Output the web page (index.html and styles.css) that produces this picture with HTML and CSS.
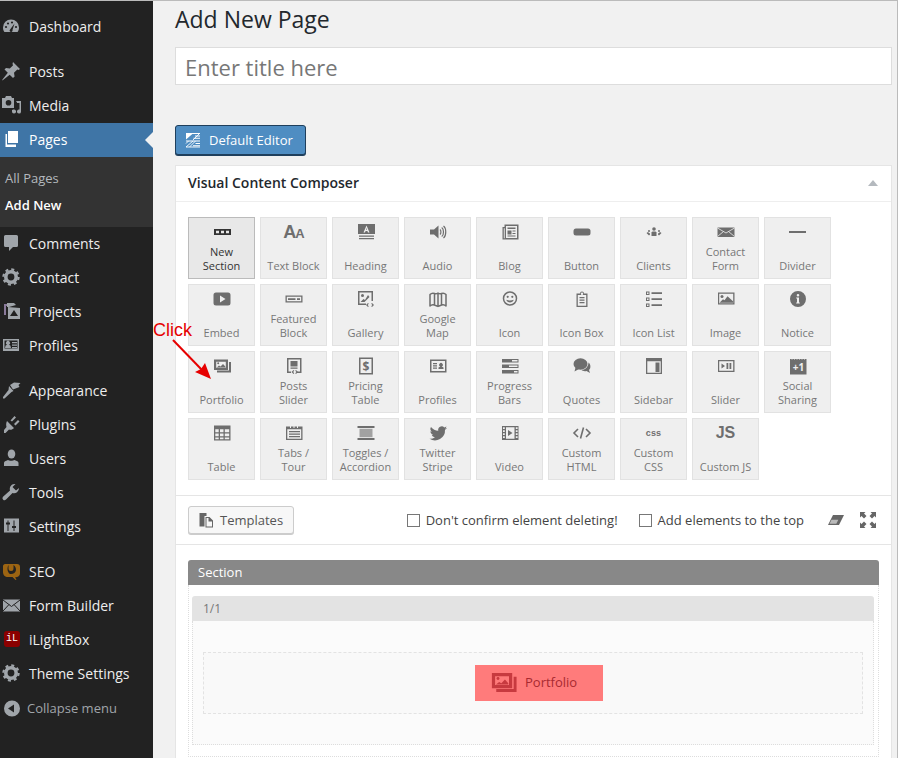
FILE: index.html
```html
<!DOCTYPE html>
<html lang="en">
<head>
    <meta charset="UTF-8">
    <title>Add New Page</title>
    <link rel="stylesheet" href="styles.css">
</head>
<body>
    <svg class="sprite" xmlns="http://www.w3.org/2000/svg">
        <!-- sidebar icons -->
        <symbol id="m-dashboard" viewBox="0 0 20 20"><path d="M10 3.5a8 8 0 0 0-8 8c0 1.700.5 3.200 1.400 4.500h13.200c.9-1.300 1.400-2.800 1.400-4.500a8 8 0 0 0-8-8z"/><g fill="#222"><circle cx="5" cy="11" r="1.100"/><circle cx="7" cy="7.500" r="1.100"/><circle cx="11" cy="6.500" r="1.100"/><circle cx="15" cy="11" r="1.100"/><path d="M13.500 7.500l-2 6.500a1.500 1.500 0 1 1-2.400-.6z"/></g></symbol>
        <symbol id="m-pin" viewBox="0 0 20 20"><path d="M12 1l7 7-1.500 1-1.200-.6-3.300 3.300.6 3.800-1.600 1.500-3.300-3.300L2 19l-1 .5.500-1 5.300-6.700-3.300-3.300L5 7l3.800.6 3.300-3.300L11.500 3z"/></symbol>
        <symbol id="m-media" viewBox="0 0 20 20"><path fill-rule="evenodd" d="M1 3h3l1-2h5l1 2h2v10H1zM7.500 5a2.800 2.800 0 1 0 0 5.600 2.800 2.800 0 0 0 0-5.600z"/><path d="M15 6h5v10.500a2 2 0 1 1-1.500-1.900V8H16v-.5zM12.500 14.500a2 2 0 1 1-1.500 1.900V15z"/></symbol>
        <symbol id="m-pages" viewBox="0 0 20 20"><path d="M7 2h10v12H7z"/><path d="M4.500 5H6v10.500h9V18H4.500z"/></symbol>
        <symbol id="m-comment" viewBox="0 0 20 20"><path d="M4.500 2h11A1.500 1.500 0 0 1 17 3.500v9a1.500 1.500 0 0 1-1.500 1.500H12l-4 4v-4H4.500A1.500 1.500 0 0 1 3 12.500v-9A1.500 1.500 0 0 1 4.500 2z"/></symbol>
        <symbol id="m-gear" viewBox="0 0 20 20"><circle cx="10" cy="10" r="5.200" fill="none" stroke="currentColor" stroke-width="3.600"/><circle cx="10" cy="10" r="7.600" fill="none" stroke="currentColor" stroke-width="2.200" stroke-dasharray="3 2.970"/></symbol>
        <symbol id="m-projects" viewBox="0 0 20 20"><path d="M3 3h7v2H5v9H3z" fill="#8a7a9a"/><path d="M6 2h7l2 2-7 2H6z"/><path fill-rule="evenodd" d="M7 6l12 1v11H7zM13 9l-4 6h8z"/></symbol>
        <symbol id="m-card" viewBox="0 0 20 20"><path fill-rule="evenodd" d="M2 4h16v12H2zM3.500 5.500v8h13v-8z"/><path d="M4 13l.6-2.500 1.600-.8a2 2 0 1 1 1.600 0l1.600.8.600 2.500zM11 7h5v1.200h-5zM11 9.500h5v1.200h-5zM11 12h5v1.200h-5z"/></symbol>
        <symbol id="m-brush" viewBox="0 0 20 20"><path d="M9 5l4-2.500 6.500.5-2 2 1 2-6.500 2.500z"/><path d="M8 6l4.500 5-2 1-7 6.500H2v-1.500l5.500-7z"/></symbol>
        <symbol id="m-plug" viewBox="0 0 20 20"><path d="M6 7l7 7c-1.500 1.700-3.400 2.100-5 1.500L4.500 19H3v-3l2.500-3C5 11 5 9 6 7z"/><path d="M9.500 6.500l4-4.500 1.500 1.500-4 4zM13 10l4-4 1.500 1.500-4 4z"/></symbol>
        <symbol id="m-user" viewBox="0 0 20 20"><ellipse cx="10.500" cy="6" rx="3.800" ry="4.500"/><path d="M3 18v-3c0-1.500 1.500-2 4-3 1 1 5 1 6.500 0 2.500 1 4 1.500 4 3v3z"/></symbol>
        <symbol id="m-wrench" viewBox="0 0 20 20"><path d="M18 6a5 5 0 0 1-6.500 5L5 17.500a2 2 0 0 1-3-2.700L9 8.500A5 5 0 0 1 14.500 2l-3 3 3.500 3.500z"/></symbol>
        <symbol id="m-sliders" viewBox="0 0 20 20"><path d="M3 2.500h15v14H3z"/><path fill="#222" d="M6.500 4.500h1v2h1.500v2H7.500V15h-1V8.500H5v-2h1.500zM12.500 4.500h1V10H15v2h-1.500v3h-1v-3H11v-2h1.500z"/></symbol>
        <symbol id="m-seo" viewBox="0 0 20 20"><path fill-rule="evenodd" d="M4 3h12c2 0 3 1 3 3v6c0 3-2 4-5 4.500l1.500 2-1 .5-3-3H7c-3 0-5-2-5-5V5c0-1 1-2 2-2zM7.500 4C6 6.500 6 11 9 13c3 .5 5.500-1 6-4 0-2-.7-3.800-2.500-5v3.500a2.500 2.500 0 0 1-5 0z"/></symbol>
        <symbol id="m-mail" viewBox="0 0 20 20"><path d="M2 4.500h17v12H2z"/><path fill="none" stroke="#222" d="M2 5l8.500 6.500L19 5M2 16l6-6.500M19 16l-6-6.500"/></symbol>
        <symbol id="m-collapse" viewBox="0 0 20 20"><path fill-rule="evenodd" d="M11 2.500a8 8 0 1 1 0 16 8 8 0 0 1 0-16zM13 6.500l-6 4 6 4z"/></symbol>

        <!-- element icons -->
        <symbol id="i-section" viewBox="0 0 20 20"><path fill-rule="evenodd" d="M2 7h17v6H2zM4 8.800v2.400h3V8.800zM9 8.800v2.400h3V8.800zM14 8.800v2.400h3V8.800z"/></symbol>
        <symbol id="i-heading" viewBox="0 0 20 20"><path fill-rule="evenodd" d="M2 2h17v10H2zM10.500 3.500l-3 7h1.500l.6-1.500h1.800l.6 1.500h1.500l-3-7zM10.500 5.800l.5 2h-1z"/><path d="M3 13.500h15v1.200H3zM3 16h15v1.200H3z"/></symbol>
        <symbol id="i-audio" viewBox="0 0 20 20"><path d="M2 7.500h4L10.500 3.500v13L6 12.500H2z"/><path d="M12 7.500c1.200.8 1.200 4.200 0 5M13.700 5.500c2.400 1.500 2.400 7.500 0 9M15.500 4c3 2.200 3 9.800 0 12" fill="none" stroke="currentColor" stroke-width="1.200"/></symbol>
        <symbol id="i-blog" viewBox="0 0 20 20"><path fill-rule="evenodd" d="M4.500 2.500h14v15H2.500V5h2zM6 4v12h11V4zM3.800 6.300v10h.9v-10z"/><path d="M7.500 5.500h8V7h-8zM7.500 8.500h4v4h-4zM12.500 8.500h3v1h-3zM12.500 11h3v1h-3zM7.500 13.500h8v1h-8z"/></symbol>
        <symbol id="i-button" viewBox="0 0 20 20"><rect x="1.500" y="6.500" width="17" height="7" rx="2.500"/></symbol>
        <symbol id="i-clients" viewBox="0 0 20 20"><circle cx="10" cy="7" r="1.800"/><path d="M7.500 14v-3.500l1-1h3l1 1V14z"/><circle cx="5" cy="9" r="1"/><circle cx="15" cy="9" r="1"/><path d="M2.500 11l1.500-1 1 1 1 .5v1L5 13.500zM17.500 11L16 10l-1 1-1 .5v1l1 1z"/></symbol>
        <symbol id="i-mail" viewBox="0 0 20 20"><path d="M1.500 5.500h17v9.500h-17z"/><path fill="none" stroke="#efefef" stroke-width=".8" d="M1.500 6L10 11l8.500-5M1.500 14.500l6-5M18.500 14.500l-6-5"/></symbol>
        <symbol id="i-embed" viewBox="0 0 20 20"><path fill-rule="evenodd" d="M4 3.500h12a2.500 2.500 0 0 1 2.500 2.500v8a2.500 2.500 0 0 1-2.500 2.500H4A2.500 2.500 0 0 1 1.500 14V6A2.500 2.500 0 0 1 4 3.500zM8 6.500v7l5.500-3.500z"/></symbol>
        <symbol id="i-featured" viewBox="0 0 20 20"><path fill-rule="evenodd" d="M1.500 6.500h17v7h-17zM2.800 7.800v4.400h14.400V7.800z"/><path d="M4 9.200h7.500v1.800H4zM13 9.200h3v1.800h-3z"/></symbol>
        <symbol id="i-gallery" viewBox="0 0 20 20"><path fill-rule="evenodd" d="M2 2h15v10h-1.500V3.500h-12v11H10V16H2z"/><circle cx="6.500" cy="6.500" r="1.500"/><path d="M4.500 13l3-3 1.500 1 3-5 1.500 2-5 5zM12 14l-2 2 2 2 .8-.8-1.200-1.200 1.200-1.200zM16 14l2 2-2 2-.8-.8 1.200-1.200-1.200-1.200z"/></symbol>
        <symbol id="i-map" viewBox="0 0 20 20"><path fill="none" stroke="currentColor" stroke-width="1.500" stroke-linejoin="round" d="M2 5.500c1.500-1.500 3-1.500 4.500-1 1 .5 2 .5 3.500-.5 1.500 1 2.500 1 3.500.5 1.500-.5 3-.5 4.500 1V17c-1.500-1.500-3-1.500-4.500-1-1 .5-2 .5-3.500 1.500-1.500-1-2.500-1-3.500-1.500-1.500-.5-3-.5-4.500 1zM6.500 4.500v12M10 4v13.500M13.500 4.500v12"/></symbol>
        <symbol id="i-smile" viewBox="0 0 20 20"><circle cx="10" cy="9.500" r="6.500" fill="none" stroke="currentColor" stroke-width="1.500"/><circle cx="7.700" cy="7.800" r="1.100"/><circle cx="12.300" cy="7.800" r="1.100"/><path d="M6.300 10.800c.8 3.600 6.600 3.600 7.400 0-2 1-5.400 1-7.400 0z"/></symbol>
        <symbol id="i-iconbox" viewBox="0 0 20 20"><path fill-rule="evenodd" d="M8 4.500a2 2 0 1 1 4 0h3.500V18h-11V4.500zM10 3.500a1.200 1.200 0 1 0 0 2.400 1.200 1.200 0 0 0 0-2.400zM5.800 6v10.700h8.400V6z"/><path d="M7.500 8h5v1.200h-5zM7.500 10.500h5v1.200h-5zM7.500 13h5v1.200h-5z"/></symbol>
        <symbol id="i-list" viewBox="0 0 20 20"><path fill-rule="evenodd" d="M2 2.500h3.500V6H2zM3 3.500V5h1.500V3.500zM2 8.500h3.500V12H2zM3 9.500V11h1.500V9.500zM2 14.500h3.500V18H2zM3 15.500V17h1.500v-1.500z"/><path d="M7.500 3.200h10.500v1.800H7.500zM7.500 9.200h10.500v1.800H7.500zM7.500 15.200h10.500v1.800H7.500z"/></symbol>
        <symbol id="i-image" viewBox="0 0 20 20"><path fill-rule="evenodd" d="M2 3.500h16.500v12H2zM3.200 4.700v9.600h14V4.700z"/><circle cx="6" cy="7.500" r="1.500"/><path d="M3.500 13.800l3.500-3.500 1.500 1 3-4 5.500 5v1.500z"/></symbol>
        <symbol id="i-notice" viewBox="0 0 20 20"><path fill-rule="evenodd" d="M10 2a8 8 0 1 1 0 16 8 8 0 0 1 0-16zM10 5a1.300 1.300 0 1 0 0 2.600A1.300 1.300 0 0 0 10 5zM8.200 8.500v1h.8v4h-.8v1h3.600v-1H11v-5z"/></symbol>
        <symbol id="i-portfolio" viewBox="0 0 20 20"><path fill-rule="evenodd" d="M2 3.500h14v10.500H2zM4.200 5.700v6.100h9.600V5.700z"/><path d="M17 6h2v10.500H5V14.500h12z"/><circle cx="6.200" cy="7.200" r="1"/><path d="M4.800 11.400l2.200-1.800 1.500 1L11 8l2.300 2.600v.8z"/></symbol>
        <symbol id="i-postslider" viewBox="0 0 20 20"><path fill-rule="evenodd" d="M3 2h14.500v15H13v-1.500h3V3.500H4.500v12H7V17H3z"/><path d="M6.500 5h7v5.500h-7zM6.500 11.500h7v1.200h-7zM9.500 14l-2 2 2 2 .8-.8-1.200-1.200 1.200-1.200zM12 14l2 2-2 2-.8-.8 1.200-1.200-1.200-1.200z"/></symbol>
        <symbol id="i-pricing" viewBox="0 0 20 20"><path fill-rule="evenodd" d="M3 1.500h14v17H3zM4.500 3v14h11V3z"/><text x="10" y="14.500" class="sym-text" font-size="12" font-weight="700" text-anchor="middle">$</text></symbol>
        <symbol id="i-profiles" viewBox="0 0 20 20"><path fill-rule="evenodd" d="M2 3.500h16.500v13H2zM3.500 5v10h13.500V5z"/><path d="M5 7h4v1.200H5zM5 9.300h4v1.200H5zM5 11.600h4v1.200H5zM10.500 13v-1.500l1.800-1a1.800 1.800 0 1 1 1.400 0l1.800 1V13z"/></symbol>
        <symbol id="i-progress" viewBox="0 0 20 20"><path fill-rule="evenodd" d="M2 3h16.500v3.500H2zM2 8.500h16.500V12H2zM2 14h16.500v3.500H2zM12 4v1.500h5.500V4zM9 9.500V11h8.500V9.500zM14 15v1.500h3.500V15z"/></symbol>
        <symbol id="i-quotes" viewBox="0 0 20 20"><ellipse cx="8.500" cy="8" rx="7" ry="5.800"/><path d="M3.500 11.500L2.500 15.500 7 13z"/><path d="M16.500 6.500c2.500 1.800 2.500 6 .5 7.500l1 3-3.500-2c-2 .5-4 0-5-1 3.500 0 7-3 7-7.500z"/></symbol>
        <symbol id="i-sidebar" viewBox="0 0 20 20"><path fill-rule="evenodd" d="M2 2h16v16H2zM3.300 5.300v11.400h13.400V5.300z"/><path d="M11.500 6.500h4v9.500h-4z"/></symbol>
        <symbol id="i-slider" viewBox="0 0 20 20"><path fill-rule="evenodd" d="M2 4h16.500v12H2zM3.200 5.200v9.600h14V5.200z"/><path d="M5.500 7.500l3.500 2.500-3.500 2.500zM10.500 7h1.800v6h-1.800zM13.500 7h1.800v6h-1.800z"/></symbol>
        <symbol id="i-social" viewBox="0 0 20 20"><path d="M2 3h16.500v15.500H2z"/><path fill="#efefef" d="M3.500 1.500h1v2h-1zM6 1.500h1v2H6zM8.500 1.500h1v2h-1zM11 1.500h1v2h-1zM13.500 1.500h1v2h-1zM16 1.500h1v2h-1z"/><text x="10.500" y="15" class="sym-text" fill="#efefef" font-size="10" font-weight="700" text-anchor="middle">+1</text></symbol>
        <symbol id="i-table" viewBox="0 0 20 20"><path fill-rule="evenodd" d="M2 2.500h16.500v15H2zM3.300 6.300v3h3.400v-3zM8 6.300v3h3.500v-3zM12.800 6.300v3h4.400v-3zM3.300 10.500v2.800h3.400v-2.800zM8 10.500v2.800h3.500v-2.800zM12.800 10.500v2.800h4.400v-2.800zM3.300 14.500v1.800h3.400v-1.800zM8 14.500v1.800h3.500v-1.800zM12.800 14.500v1.800h4.400v-1.800z"/></symbol>
        <symbol id="i-tabs" viewBox="0 0 20 20"><path fill-rule="evenodd" d="M2 3.500h4v1.500h1V3.500h2.500V5h1V3.500h2.500V5h1V3.500H18.500V17H2zM3.300 6.300v9.400h13.900V6.300z"/><path d="M5 8h11v1.200H5zM5 10.500h11v1.200H5zM5 13h11v1.200H5z"/></symbol>
        <symbol id="i-toggles" viewBox="0 0 20 20"><path d="M1.500 3h17v2h-17zM1.500 15h17v2h-17z"/><path d="M3.500 5.800h13v8.400h-13z" opacity=".6"/></symbol>
        <symbol id="i-twitter" viewBox="0 0 20 20"><path d="M19 5a7 7 0 0 1-2 .6 3.500 3.500 0 0 0 1.500-2 7 7 0 0 1-2.200.9A3.500 3.500 0 0 0 10.300 7.700 10 10 0 0 1 3 4a3.500 3.500 0 0 0 1 4.700 3.400 3.400 0 0 1-1.600-.4c0 1.700 1.200 3.100 2.800 3.500-.5.100-1 .1-1.600 0a3.500 3.500 0 0 0 3.300 2.400A7 7 0 0 1 1.500 15.700 10 10 0 0 0 17 6.800 7 7 0 0 0 19 5z"/></symbol>
        <symbol id="i-video" viewBox="0 0 20 20"><path fill-rule="evenodd" d="M2 3h16.500v14H2zM3 4.300v1.800h1.800V4.300zM3 7.300v1.800h1.800V7.300zM3 10.300v1.800h1.800v-1.800zM3 13.300v1.800h1.800v-1.800zM15.800 4.300v1.800h1.800V4.300zM15.800 7.300v1.800h1.800V7.300zM15.800 10.300v1.800h1.800v-1.800zM15.800 13.300v1.800h1.800v-1.800zM6 4.300v11.400h8.500V4.300z"/><path d="M8 7l4.500 3L8 13z"/></symbol>
        <symbol id="i-html" viewBox="0 0 20 20"><path fill="none" stroke="currentColor" stroke-width="1.600" d="M6 6l-4 4 4 4M14 6l4 4-4 4M11.500 4.500l-3 11"/></symbol>

        <!-- toolbar icons -->
        <symbol id="t-lines" viewBox="0 0 16 16"><path d="M1 1h7.500L1 7.500zM1 8.500h14v.9H1zM15 1v.9H1V1zM10 3.500h5v.9h-5zM8.500 5.800H15v.9H8.500zM15 11h-4.500v.9H15zM15 13.300H8v.9h7z"/><path fill="none" stroke="#fff" stroke-width=".9" d="M1 15L8 9M4.500 15l6-6M15 1L8 8M1 11.500L3.500 9M1 15h14"/></symbol>
        <symbol id="t-templates" viewBox="0 0 16 16"><path d="M1.500 1h7v3h-2v10.500h-5z"/><path fill-rule="evenodd" d="M7.500 5h4l3.500 3.500V15.500H7.500zM8.500 6v8.500h5.500V9.500h-3.500V6z"/></symbol>
        <symbol id="t-eraser" viewBox="0 0 20 20"><path d="M7 5h11l-5 10H2z"/><path fill="#fff" d="M5.500 9.800l-2 4h6.800l2-4z" opacity=".55"/></symbol>
        <symbol id="t-full" viewBox="0 0 20 20"><path d="M2 2h5.500L6 3.500 8.500 6 6 8.500 3.500 6 2 7.500zM18 2v5.500L16.500 6 14 8.500 11.500 6 14 3.500 12.500 2zM2 18v-5.500L3.500 14 6 11.500 8.500 14 6 16.500 7.500 18zM18 18h-5.500l1.500-1.500L11.500 14 14 11.500l2.500 2.500 1.500-1.500z"/></symbol>
    </svg>

    <div class="page">
        <nav class="sidebar">
            <ul class="menu">
                <li class="menu-item"><svg class="menu-icon"><use href="#m-dashboard"/></svg>Dashboard</li>
                <li class="menu-item sep"><svg class="menu-icon"><use href="#m-pin"/></svg>Posts</li>
                <li class="menu-item"><svg class="menu-icon"><use href="#m-media"/></svg>Media</li>
                <li class="menu-item current"><svg class="menu-icon"><use href="#m-pages"/></svg>Pages</li>
                <li class="submenu">
                    <div class="submenu-item">All Pages</div>
                    <div class="submenu-item active">Add New</div>
                </li>
                <li class="menu-item"><svg class="menu-icon"><use href="#m-comment"/></svg>Comments</li>
                <li class="menu-item"><svg class="menu-icon"><use href="#m-gear"/></svg>Contact</li>
                <li class="menu-item"><svg class="menu-icon"><use href="#m-projects"/></svg>Projects</li>
                <li class="menu-item"><svg class="menu-icon"><use href="#m-card"/></svg>Profiles</li>
                <li class="menu-item sep"><svg class="menu-icon"><use href="#m-brush"/></svg>Appearance</li>
                <li class="menu-item"><svg class="menu-icon"><use href="#m-plug"/></svg>Plugins</li>
                <li class="menu-item"><svg class="menu-icon"><use href="#m-user"/></svg>Users</li>
                <li class="menu-item"><svg class="menu-icon"><use href="#m-wrench"/></svg>Tools</li>
                <li class="menu-item"><svg class="menu-icon"><use href="#m-sliders"/></svg>Settings</li>
                <li class="menu-item sep"><svg class="menu-icon seo"><use href="#m-seo"/></svg>SEO</li>
                <li class="menu-item"><svg class="menu-icon"><use href="#m-mail"/></svg>Form Builder</li>
                <li class="menu-item"><span class="lightbox-icon">iL</span>iLightBox</li>
                <li class="menu-item"><svg class="menu-icon"><use href="#m-gear"/></svg>Theme Settings</li>
                <li class="menu-item collapse"><svg class="menu-icon"><use href="#m-collapse"/></svg>Collapse menu</li>
            </ul>
        </nav>

        <main class="content">
            <h1 class="page-title">Add New Page</h1>
            <div class="title-input">Enter title here</div>
            <button class="editor-btn"><svg class="editor-icon"><use href="#t-lines"/></svg>Default Editor</button>

            <section class="composer">
                <header class="composer-head">
                    <h2>Visual Content Composer</h2>
                    <span class="caret"></span>
                </header>

                <div class="elements">
                    <div class="tile selected"><svg class="tile-icon"><use href="#i-section"/></svg><span>New<br>Section</span></div>
                    <div class="tile"><span class="glyph aa">A<small>A</small></span><span>Text Block</span></div>
                    <div class="tile"><svg class="tile-icon"><use href="#i-heading"/></svg><span>Heading</span></div>
                    <div class="tile"><svg class="tile-icon"><use href="#i-audio"/></svg><span>Audio</span></div>
                    <div class="tile"><svg class="tile-icon"><use href="#i-blog"/></svg><span>Blog</span></div>
                    <div class="tile"><svg class="tile-icon"><use href="#i-button"/></svg><span>Button</span></div>
                    <div class="tile"><svg class="tile-icon"><use href="#i-clients"/></svg><span>Clients</span></div>
                    <div class="tile"><svg class="tile-icon"><use href="#i-mail"/></svg><span>Contact<br>Form</span></div>
                    <div class="tile"><span class="divider-icon"></span><span>Divider</span></div>

                    <div class="tile"><svg class="tile-icon"><use href="#i-embed"/></svg><span>Embed</span></div>
                    <div class="tile"><svg class="tile-icon"><use href="#i-featured"/></svg><span>Featured<br>Block</span></div>
                    <div class="tile"><svg class="tile-icon"><use href="#i-gallery"/></svg><span>Gallery</span></div>
                    <div class="tile"><svg class="tile-icon"><use href="#i-map"/></svg><span>Google<br>Map</span></div>
                    <div class="tile"><svg class="tile-icon"><use href="#i-smile"/></svg><span>Icon</span></div>
                    <div class="tile"><svg class="tile-icon"><use href="#i-iconbox"/></svg><span>Icon Box</span></div>
                    <div class="tile"><svg class="tile-icon"><use href="#i-list"/></svg><span>Icon List</span></div>
                    <div class="tile"><svg class="tile-icon"><use href="#i-image"/></svg><span>Image</span></div>
                    <div class="tile"><svg class="tile-icon"><use href="#i-notice"/></svg><span>Notice</span></div>

                    <div class="tile"><svg class="tile-icon"><use href="#i-portfolio"/></svg><span>Portfolio</span></div>
                    <div class="tile"><svg class="tile-icon"><use href="#i-postslider"/></svg><span>Posts<br>Slider</span></div>
                    <div class="tile"><svg class="tile-icon"><use href="#i-pricing"/></svg><span>Pricing<br>Table</span></div>
                    <div class="tile"><svg class="tile-icon"><use href="#i-profiles"/></svg><span>Profiles</span></div>
                    <div class="tile"><svg class="tile-icon"><use href="#i-progress"/></svg><span>Progress<br>Bars</span></div>
                    <div class="tile"><svg class="tile-icon"><use href="#i-quotes"/></svg><span>Quotes</span></div>
                    <div class="tile"><svg class="tile-icon"><use href="#i-sidebar"/></svg><span>Sidebar</span></div>
                    <div class="tile"><svg class="tile-icon"><use href="#i-slider"/></svg><span>Slider</span></div>
                    <div class="tile"><svg class="tile-icon"><use href="#i-social"/></svg><span>Social<br>Sharing</span></div>

                    <div class="tile"><svg class="tile-icon"><use href="#i-table"/></svg><span>Table</span></div>
                    <div class="tile"><svg class="tile-icon"><use href="#i-tabs"/></svg><span>Tabs /<br>Tour</span></div>
                    <div class="tile"><svg class="tile-icon"><use href="#i-toggles"/></svg><span>Toggles /<br>Accordion</span></div>
                    <div class="tile"><svg class="tile-icon"><use href="#i-twitter"/></svg><span>Twitter<br>Stripe</span></div>
                    <div class="tile"><svg class="tile-icon"><use href="#i-video"/></svg><span>Video</span></div>
                    <div class="tile"><svg class="tile-icon"><use href="#i-html"/></svg><span>Custom<br>HTML</span></div>
                    <div class="tile"><span class="glyph css">CSS</span><span>Custom<br>CSS</span></div>
                    <div class="tile"><span class="glyph js">JS</span><span>Custom JS</span></div>
                </div>

                <div class="toolbar">
                    <button class="templates-btn"><svg class="templates-icon"><use href="#t-templates"/></svg>Templates</button>
                    <div class="toolbar-right">
                        <label class="check"><span class="box"></span>Don't confirm element deleting!</label>
                        <label class="check"><span class="box"></span>Add elements to the top</label>
                        <svg class="tool-icon"><use href="#t-eraser"/></svg>
                        <svg class="tool-icon"><use href="#t-full"/></svg>
                    </div>
                </div>

                <div class="canvas">
                    <div class="section-bar">Section</div>
                    <div class="section-body">
                        <div class="column-bar">1/1</div>
                        <div class="column-body">
                            <div class="dropzone">
                                <div class="placed"><svg class="placed-icon"><use href="#i-portfolio"/></svg>Portfolio</div>
                            </div>
                        </div>
                    </div>
                </div>
            </section>
        </main>

        <!-- screenshot annotation over the tiles -->
        <div class="note">Click</div>
        <svg class="note-arrow" width="50" height="50" viewBox="0 0 50 50">
            <path d="M2 2L31 32" stroke="#e60000" stroke-width="2" fill="none"/>
            <path d="M40 41L24 34l6-3 4-6z" fill="#e60000"/>
        </svg>
    </div>
</body>
</html>
```

FILE: styles.css
```css
* {
    box-sizing: border-box;
}

html, body {
    margin: 0;
    padding: 0;
    height: 100%;
    overflow: hidden;
}

body {
    font-family: "Open Sans", sans-serif;
    background-color: #fff;
    color: #444;
}

.sprite {
    display: none;
}

.sym-text {
    font-family: "Open Sans", sans-serif;
}

.page {
    position: relative;
    display: flex;
    width: 898px;
    height: 758px;
    border-top: 1px solid #bbb;
    border-right: 1px solid #bbb;
    background-color: #f1f1f1;
}

/* sidebar */
.sidebar {
    width: 153px;
    flex-shrink: 0;
    background-color: #222;
    padding-top: 9px;
}

.menu {
    list-style: none;
    margin: 0;
    padding: 0;
}

.menu-item {
    display: flex;
    align-items: center;
    gap: 8px;
    height: 34px;
    padding: 0 0 2px 1px;
    font-size: 14px;
    color: #eee;
}

.menu-item.sep {
    margin-top: 11px;
}

.menu-icon {
    width: 20px;
    height: 20px;
    flex-shrink: 0;
    fill: #a0a5aa;
    color: #a0a5aa;
}

.menu-icon.seo {
    fill: #9c6412;
}

.lightbox-icon {
    width: 16px;
    height: 16px;
    margin: 0 1px 0 3px;
    border-radius: 3px;
    background-color: #8b0000;
    color: #fff;
    font-family: "Liberation Mono", monospace;
    font-size: 10px;
    line-height: 16px;
    text-align: center;
    flex-shrink: 0;
}

.menu-item.current {
    position: relative;
    background-color: #3f75a6;
    color: #fff;
}

.menu-item.current .menu-icon {
    fill: #fff;
}

.menu-item.current::after {
    content: "";
    position: absolute;
    right: 0;
    top: 9px;
    border: 8px solid transparent;
    border-right-color: #f1f1f1;
    border-left-width: 0;
}

.submenu {
    height: 70px;
    padding-top: 8px;
    background-color: #333;
}

.submenu-item {
    height: 27px;
    padding-left: 5px;
    font-size: 13px;
    line-height: 27px;
    color: #b4b9be;
}

.submenu-item.active {
    font-weight: 600;
    color: #fff;
}

.menu-item.collapse {
    gap: 6px;
    padding-bottom: 0;
    font-size: 13px;
    color: #a0a5aa;
}

/* main column */
.content {
    width: 717px;
    margin-left: 22px;
}

.page-title {
    margin: 0;
    height: 46px;
    padding-top: 3px;
    font-size: 23px;
    font-weight: 400;
    line-height: 30px;
    color: #23282d;
}

.title-input {
    height: 38px;
    padding: 2px 0 0 9px;
    border: 1px solid #ddd;
    background-color: #fff;
    font-size: 22px;
    line-height: 35px;
    color: #777;
}

.editor-btn {
    display: flex;
    align-items: center;
    gap: 8px;
    width: 131px;
    height: 30px;
    margin-top: 40px;
    padding: 0 0 0 9px;
    border: 1px solid #1f3f5c;
    border-radius: 3px;
    background-color: #4f8dc2;
    box-shadow: 0 1px 0 #1f3f5c;
    font-family: inherit;
    font-size: 13px;
    color: #fff;
}

.editor-icon {
    width: 16px;
    height: 16px;
    fill: #fff;
}

/* composer box */
.composer {
    height: 600px;
    margin-top: 10px;
    border: 1px solid #e5e5e5;
    background-color: #fff;
}

.composer-head {
    display: flex;
    align-items: center;
    justify-content: space-between;
    height: 36px;
    padding: 0 13px 2px 12px;
    border-bottom: 1px solid #eee;
}

.composer-head h2 {
    margin: 0;
    font-size: 14px;
    font-weight: 600;
    color: #23282d;
}

.caret {
    border-left: 5px solid transparent;
    border-right: 5px solid transparent;
    border-bottom: 6px solid #b4b9be;
}

.elements {
    display: grid;
    grid-template-columns: repeat(9, 67px);
    grid-auto-rows: 62px;
    gap: 5px;
    height: 294px;
    padding: 15px 12px;
    border-bottom: 1px solid #e5e5e5;
}

.tile {
    display: flex;
    flex-direction: column;
    align-items: center;
    justify-content: space-between;
    padding: 4px 0 5px;
    border: 1px solid #e2e2e2;
    background-color: #efefef;
    font-size: 11px;
    line-height: 14px;
    text-align: center;
    color: #777;
    fill: #6e6e6e;
}

.tile.selected {
    border-color: #bbb;
    background-color: #e8e8e8;
    color: #333;
    fill: #333;
}

.tile-icon {
    width: 20px;
    height: 20px;
    flex-shrink: 0;
    color: #6e6e6e;
}

.glyph {
    height: 20px;
    font-family: "Liberation Sans", sans-serif;
    font-weight: 700;
    color: #6e6e6e;
}

.aa {
    font-size: 18px;
    line-height: 20px;
    letter-spacing: -1px;
}

.aa small {
    font-size: 13px;
}

.css {
    font-size: 9px;
    line-height: 20px;
    text-transform: lowercase;
    letter-spacing: .2px;
}

.js {
    font-size: 16px;
    line-height: 20px;
}

.divider-icon {
    display: block;
    width: 17px;
    height: 20px;
    background: linear-gradient(#6e6e6e, #6e6e6e) center / 17px 2px no-repeat;
}

.toolbar {
    display: flex;
    align-items: center;
    justify-content: space-between;
    height: 49px;
    padding: 0 13px 0 12px;
    border-bottom: 1px solid #e5e5e5;
}

.templates-btn {
    display: flex;
    align-items: center;
    gap: 6px;
    width: 106px;
    height: 28px;
    padding: 0 0 0 9px;
    border: 1px solid #ccc;
    border-radius: 3px;
    background-color: #f7f7f7;
    box-shadow: 0 1px 0 #ccc;
    font-family: inherit;
    font-size: 13px;
    color: #555;
}

.templates-icon {
    width: 16px;
    height: 16px;
    fill: #666;
}

.toolbar-right {
    display: flex;
    align-items: center;
}

.check {
    display: flex;
    align-items: center;
    gap: 6px;
    margin-right: 21px;
    font-size: 13px;
    color: #444;
}

.check + .tool-icon {
    margin-left: 1px;
}

.box {
    width: 13px;
    height: 13px;
    border: 1px solid #777;
    background-color: #fff;
}

.tool-icon {
    width: 20px;
    height: 20px;
    fill: #666;
    margin-left: 12px;
}

/* dropped elements area */
.canvas {
    padding: 15px 12px 0;
}

.section-bar {
    height: 25px;
    padding-left: 10px;
    border-radius: 3px 3px 0 0;
    background-color: #888;
    font-size: 13px;
    line-height: 25px;
    color: #fff;
}

.section-body {
    height: 172px;
    padding: 11px 4px 0 3px;
    border: 1px dotted #ddd;
    border-top: 0;
    background-color: #fff;
}

.column-bar {
    height: 25px;
    padding-left: 11px;
    border-radius: 3px 3px 0 0;
    background-color: #e3e3e3;
    font-size: 12px;
    line-height: 25px;
    color: #777;
}

.column-body {
    height: 124px;
    padding: 31px 10px 0;
    border: 1px dotted #ddd;
    border-top: 0;
    background-color: #fbfbfb;
}

.dropzone {
    display: flex;
    justify-content: center;
    align-items: center;
    height: 62px;
    border: 1px dashed #e3e3e3;
    background-color: #f9f9f9;
}

.placed {
    display: flex;
    align-items: center;
    gap: 7px;
    width: 128px;
    height: 36px;
    margin-left: 12px;
    padding: 0 0 2px 14px;
    background-color: #ff7b7b;
    font-size: 13px;
    color: #a82a30;
}

.placed-icon {
    width: 29px;
    height: 29px;
    fill: #c73a3f;
}

/* annotation */
.note {
    position: absolute;
    left: 153px;
    top: 320px;
    font-family: "Liberation Sans", sans-serif;
    font-size: 18px;
    line-height: 18px;
    color: #e60000;
}

.note-arrow {
    position: absolute;
    left: 171px;
    top: 337px;
}
```
